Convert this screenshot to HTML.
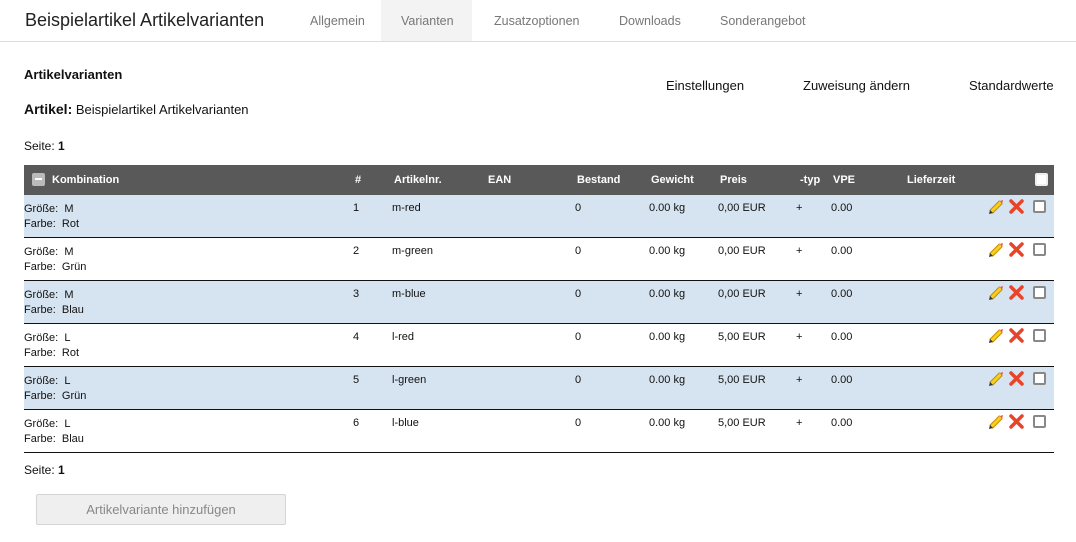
<!DOCTYPE html>
<html><head><meta charset="utf-8"><style>
*{margin:0;padding:0;box-sizing:border-box}
body{width:1076px;height:542px;background:#fff;font-family:"Liberation Sans",sans-serif;color:#111;position:relative;overflow:hidden}
.a{position:absolute;white-space:nowrap}
.tab{position:absolute;top:0;height:41px;line-height:43px;font-size:12.5px;color:#777}
.hd{position:absolute;left:24px;top:165px;width:1030px;height:30px;background:#595959}
.hd span{position:absolute;top:9px;font-size:11px;font-weight:bold;color:#fff}
.row{position:absolute;left:24px;width:1030px;height:43px;border-bottom:1.5px solid #111;font-size:11px}
.row span{position:absolute;top:7px}
.blue{background:#d6e4f1}
.cb{position:absolute;width:13px;height:13px;border:2px solid #888;border-radius:2px;background:#fff}
</style></head><body>
<div class="a" style="left:25px;top:10px;font-size:18px;color:#222">Beispielartikel Artikelvarianten</div>
<div style="position:absolute;left:381px;top:0;width:91px;height:41px;background:#f3f3f3"></div>
<div class="tab" style="left:310px">Allgemein</div>
<div class="tab" style="left:401px">Varianten</div>
<div class="tab" style="left:494px">Zusatzoptionen</div>
<div class="tab" style="left:619px">Downloads</div>
<div class="tab" style="left:720px">Sonderangebot</div>
<div style="position:absolute;left:0;top:41px;width:1076px;height:1px;background:#ddd"></div>
<div class="a" style="left:24px;top:67px;font-size:13px;font-weight:bold">Artikelvarianten</div>
<div class="a" style="left:24px;top:101px;font-size:13px"><b style="font-size:14px">Artikel:</b> Beispielartikel Artikelvarianten</div>
<div class="a" style="left:24px;top:139px;font-size:12px">Seite: <b>1</b></div>
<div class="a" style="left:666px;top:78px;font-size:13px">Einstellungen</div>
<div class="a" style="left:803px;top:78px;font-size:13px">Zuweisung ändern</div>
<div class="a" style="left:969px;top:78px;font-size:13px">Standardwerte</div>
<div class="hd">
<div style="position:absolute;left:8px;top:8px;width:13px;height:13px;background:#bbb;border-radius:2px"><div style="position:absolute;left:3px;top:5px;width:7px;height:2px;background:#fff"></div></div>
<span style="left:28px">Kombination</span><span style="left:331px">#</span><span style="left:370px">Artikelnr.</span><span style="left:464px">EAN</span><span style="left:553px">Bestand</span><span style="left:627px">Gewicht</span><span style="left:696px">Preis</span><span style="left:776px">-typ</span><span style="left:809px">VPE</span><span style="left:883px">Lieferzeit</span>
<div class="cb" style="left:1011px;top:8px;border-color:#eee"></div>
</div>
<div id="rows"></div>
<div class="a" style="left:24px;top:463px;font-size:12px">Seite: <b>1</b></div>
<div style="position:absolute;left:36px;top:494px;width:250px;height:31px;background:#efefef;border:1px solid #d4d4d4;border-radius:2px;text-align:center;line-height:30px;font-size:13px;color:#888">Artikelvariante hinzufügen</div>
<script>
var d=[["M","Rot","1","m-red","0,00"],["M","Grün","2","m-green","0,00"],["M","Blau","3","m-blue","0,00"],["L","Rot","4","l-red","5,00"],["L","Grün","5","l-green","5,00"],["L","Blau","6","l-blue","5,00"]];
var h="";
d.forEach(function(r,i){var t=195+i*43;
h+='<div class="row'+(i%2==0?' blue':'')+'" style="top:'+t+'px"><span style="left:0;line-height:15px">Größe:&nbsp; '+r[0]+'<br>Farbe:&nbsp; '+r[1]+'</span><span style="left:329px">'+r[2]+'</span><span style="left:368px">'+r[3]+'</span><span style="left:551px">0</span><span style="left:625px">0.00 kg</span><span style="left:694px">'+r[4]+' EUR</span><span style="left:772px">+</span><span style="left:807px">0.00</span>'+
'<svg style="position:absolute;left:964px;top:3px" width="17" height="17" viewBox="0 0 17 17"><path d="M3 14 L13 4" stroke="#c98a00" stroke-width="5" stroke-linecap="butt"/><path d="M3 14 L13 4" stroke="#f5d020" stroke-width="3"/><path d="M12 3 L15 2 L14 6Z" fill="#d55"/><path d="M1 16 L2 12 L5 15Z" fill="#333"/></svg>'+
'<svg style="position:absolute;left:985px;top:4px" width="15" height="15" viewBox="0 0 15 15"><path d="M2 2L13 13M13 2L2 13" stroke="#e8442a" stroke-width="3.5" stroke-linecap="round"/></svg>'+
'<div class="cb" style="left:1009px;top:5px"></div></div>';});
document.getElementById("rows").innerHTML=h;
</script>
</body></html>
